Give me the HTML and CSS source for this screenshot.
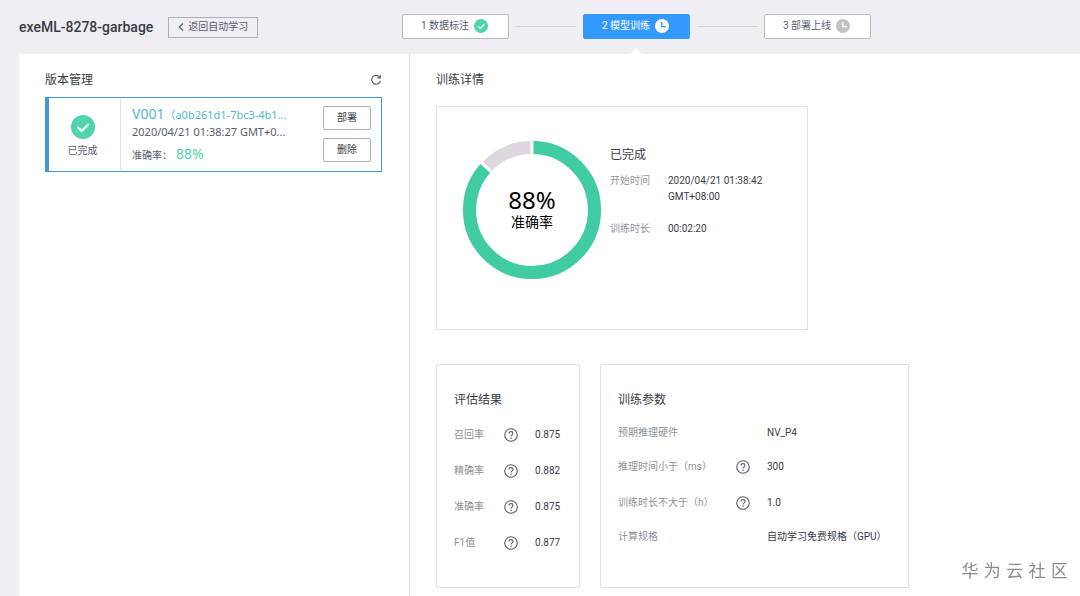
FILE: index.html
```html
<!DOCTYPE html>
<html lang="zh-CN">
<head>
  <meta charset="UTF-8">
  <meta name="viewport" content="width=device-width, initial-scale=1.0">
  <title>exeML-8278-garbage</title>
  <link rel="stylesheet" href="styles.css">
</head>
<body>
  <svg class="sprite" aria-hidden="true">
    <symbol id="icon-help" viewBox="0 0 14 14">
      <circle cx="7" cy="7" r="6.3" fill="none" stroke="currentColor" stroke-width="1.1"/>
      <path d="M5 5.6C5 4.3 5.9 3.6 7 3.6s2 .7 2 1.8c0 1.4-2 1.5-2 3" fill="none" stroke="currentColor" stroke-width="1.1"/>
      <circle cx="7" cy="10.2" r=".8" fill="currentColor"/>
    </symbol>
    <symbol id="icon-check" viewBox="0 0 24 24">
      <circle cx="12" cy="12" r="12" fill="#50d4ab"/>
      <path d="M6.5 12l4.2 4 7-7" fill="none" stroke="#fff" stroke-width="2"/>
    </symbol>
    <symbol id="icon-clock" viewBox="0 0 14 14">
      <circle cx="7" cy="7" r="7" fill="currentColor"/>
      <path class="clock-hand" d="M6.8 3v4.6h4" fill="none" stroke-width="1.4"/>
    </symbol>
  </svg>

  <header class="header">
    <div class="header-left">
      <h1>exeML-8278-garbage</h1>
      <button type="button" class="back-btn">
        <svg width="6" height="8" viewBox="0 0 6 8" aria-hidden="true"><path d="M5 .5L1.2 4 5 7.5" fill="none" stroke="currentColor" stroke-width="1.2"/></svg>
        返回自动学习
      </button>
    </div>
    <nav class="steps">
      <button type="button" class="step">1 数据标注 <svg class="step-icon"><use href="#icon-check"/></svg></button>
      <span class="step-line"></span>
      <button type="button" class="step active">2 模型训练 <svg class="step-icon"><use href="#icon-clock"/></svg></button>
      <span class="step-line"></span>
      <button type="button" class="step waiting">3 部署上线 <svg class="step-icon"><use href="#icon-clock"/></svg></button>
    </nav>
  </header>

  <main class="main">
    <aside class="versions">
      <div class="versions-head">
        <h2>版本管理</h2>
        <button type="button" class="refresh-btn" aria-label="刷新">
          <svg width="12" height="12" viewBox="0 0 12 12"><path d="M9.6 3A4.4 4.4 0 1 0 10.4 7M10.3 1v2.9H7.2" fill="none" stroke="currentColor" stroke-width="1.1"/></svg>
        </button>
      </div>

      <div class="version-card">
        <div class="version-status">
          <svg width="24" height="24"><use href="#icon-check"/></svg>
          <span>已完成</span>
        </div>
        <div class="version-info">
          <a href="#" class="version-name">V001<small>（a0b261d1-7bc3-4b1...</small></a>
          <p class="version-time">2020/04/21 01:38:27 GMT+0...</p>
          <p class="version-score">准确率：<b>88%</b></p>
        </div>
        <div class="version-actions">
          <button type="button">部署</button>
          <button type="button">删除</button>
        </div>
      </div>
    </aside>

    <section class="detail">
      <h2>训练详情</h2>

      <div class="panel summary">
        <div class="donut">
          <svg viewBox="0 0 138 138" aria-hidden="true">
            <circle cx="69" cy="69" r="62.5" fill="none" stroke="#dcd8de" stroke-width="13"/>
            <circle cx="69" cy="69" r="62.5" fill="none" stroke="#3fcca2" stroke-width="13" pathLength="100" stroke-dasharray="87 13" transform="rotate(-90 69 69)"/>
            <path d="M69 14V0" stroke="#fff" stroke-width="3"/>
            <path d="M69 14V0" stroke="#fff" stroke-width="3" transform="rotate(-47 69 69)"/>
          </svg>
          <div class="donut-text">
            <strong>88%</strong>
            <span>准确率</span>
          </div>
        </div>
        <div class="summary-info">
          <h3>已完成</h3>
          <dl>
            <dt>开始时间</dt>
            <dd>2020/04/21 01:38:42<br>GMT+08:00</dd>
            <dt>训练时长</dt>
            <dd>00:02:20</dd>
          </dl>
        </div>
      </div>

      <div class="panel-row">
        <div class="panel result">
          <h3>评估结果</h3>
          <table>
            <tr class="with-help"><th scope="row">召回率</th><td><svg class="help"><use href="#icon-help"/></svg></td><td>0.875</td></tr>
            <tr class="with-help"><th scope="row">精确率</th><td><svg class="help"><use href="#icon-help"/></svg></td><td>0.882</td></tr>
            <tr class="with-help"><th scope="row">准确率</th><td><svg class="help"><use href="#icon-help"/></svg></td><td>0.875</td></tr>
            <tr class="with-help"><th scope="row">F1值</th><td><svg class="help"><use href="#icon-help"/></svg></td><td>0.877</td></tr>
          </table>
        </div>

        <div class="panel params">
          <h3>训练参数</h3>
          <table>
            <tr><th scope="row">预期推理硬件</th><td></td><td>NV_P4</td></tr>
            <tr class="with-help"><th scope="row">推理时间小于（ms）</th><td><svg class="help"><use href="#icon-help"/></svg></td><td>300</td></tr>
            <tr class="with-help"><th scope="row">训练时长不大于（h）</th><td><svg class="help"><use href="#icon-help"/></svg></td><td>1.0</td></tr>
            <tr><th scope="row">计算规格</th><td></td><td>自动学习免费规格（GPU）</td></tr>
          </table>
        </div>
      </div>
    </section>
  </main>

  <div class="watermark">华 为 云 社 区</div>
</body>
</html>
```

FILE: styles.css
```css
:root {
  --bg: #eeeef3;
  --blue: #3399ff;
  --green: #50d4ab;
  --text: #383b45;
  --text-muted: #8f929b;
  --border: #dfe1e6;
}

* {
  box-sizing: border-box;
}

body {
  margin: 0;
  font-family: Roboto, "Noto Sans CJK SC", sans-serif;
  font-size: 10px;
  line-height: 16px;
  background: var(--bg);
  color: var(--text);
}

h1, h2, h3, p, dl, dd {
  margin: 0;
}

h2, h3 {
  font-size: 12px;
  font-weight: 400;
}

button {
  font: inherit;
  color: inherit;
  padding: 0;
  cursor: pointer;
}

.sprite {
  display: none;
}

/* header */
.header {
  display: flex;
  height: 54px;
  padding-left: 19px;
}

.header-left {
  display: flex;
  align-items: center;
  gap: 15px;
  width: 383px;
}

h1 {
  font-size: 14px;
  font-weight: 500;
}

.back-btn {
  display: flex;
  align-items: center;
  gap: 4px;
  height: 21px;
  padding: 0 9px;
  border: 1px solid #adb0b8;
  background: transparent;
  color: #575d6c;
}

.steps {
  display: flex;
  align-items: center;
  gap: 7px;
  height: 52px;
}

.step {
  display: flex;
  align-items: center;
  justify-content: center;
  gap: 5px;
  width: 107px;
  height: 25px;
  padding-right: 2px;
  border: 1px solid #b8bac2;
  border-radius: 2px;
  background: #fff;
  color: #575d6c;
}

.step-icon {
  width: 14px;
  height: 14px;
}

.step-line {
  width: 60px;
  height: 1px;
  background: #cfd1d8;
}

.step.active {
  position: relative;
  border-color: var(--blue);
  background: var(--blue);
  color: #fff;
}

/* arrow that joins the current step to the content */
.step.active::after {
  content: "";
  position: absolute;
  top: 33px;
  left: 44px;
  border: 8px solid transparent;
  border-top: 0;
  border-bottom-color: #fff;
}

.clock-hand {
  stroke: var(--blue);
}

.waiting .step-icon {
  color: #c3c3c5;
}

.waiting {
  --blue: #fff;
}

/* content */
.main {
  display: flex;
  min-height: calc(100vh - 54px);
  margin-left: 19px;
  background: #fff;
}

.versions {
  width: 391px;
  padding: 18px 27px 0 26px;
  border-right: 1px solid var(--border);
}

.versions-head {
  display: flex;
  justify-content: space-between;
  align-items: center;
  margin-bottom: 9px;
}

.refresh-btn {
  display: flex;
  border: 0;
  background: none;
  color: #575d6c;
}

.version-card {
  display: flex;
  height: 75px;
  border: 1px solid #3f97dc;
  border-left-width: 4px;
}

.version-status {
  display: flex;
  flex-direction: column;
  align-items: center;
  justify-content: center;
  gap: 4px;
  width: 72px;
  padding-top: 4px;
  padding-right: 4px;
  border-right: 1px solid var(--border);
  color: #575d6c;
}

.version-info {
  flex: 1;
  padding: 6px 0 0 11px;
  font-family: "Noto Sans", "Noto Sans CJK SC", sans-serif;
  color: #575d6c;
  white-space: nowrap;
}

.version-name {
  display: block;
  height: 20px;
  line-height: 19px;
  font-size: 14px;
  color: #4fb8ce;
  text-decoration: none;
}

.version-name small,
.version-time {
  font-size: 11px;
}

.version-score {
  margin-top: 4px;
  line-height: 20px;
}

.version-score b {
  margin-left: 4px;
  font-size: 14px;
  font-weight: 400;
  color: var(--green);
}

.version-actions {
  display: flex;
  flex-direction: column;
  gap: 8px;
  padding: 8px 10px;
}

.version-actions button {
  width: 48px;
  height: 24px;
  border: 1px solid #adb0b8;
  border-radius: 2px;
  background: #fff;
}

.detail {
  flex: 1;
  padding: 18px 26px 8px;
}

.panel {
  border: 1px solid var(--border);
}

.summary {
  display: flex;
  gap: 9px;
  width: 372px;
  max-width: 100%;
  height: 224px;
  margin: 18px 0 34px;
  padding: 34px 26px;
}

.donut {
  display: grid;
  place-items: center;
  width: 138px;
  height: 138px;
}

.donut svg,
.donut-text {
  grid-area: 1 / 1;
}

.donut-text {
  display: flex;
  flex-direction: column;
  align-items: center;
  font-size: 14px;
  line-height: 20px;
  color: #000;
}

.donut-text strong {
  font-family: "Noto Sans", sans-serif;
  font-size: 24px;
  line-height: 24px;
  font-weight: 400;
}

.summary-info {
  padding-top: 6px;
}

.summary-info dl {
  display: grid;
  grid-template-columns: 58px auto;
  row-gap: 16px;
  margin-top: 10px;
}

dt, th {
  color: var(--text-muted);
}

.panel-row {
  display: flex;
  gap: 20px;
}

.result {
  width: 144px;
}

.params {
  width: 309px;
}

.result,
.params {
  padding: 23px 17px 26px;
}

.panel-row h3 {
  margin-bottom: 5px;
  line-height: 24px;
}

table {
  width: 100%;
  border-collapse: collapse;
}

th, td {
  height: 32px;
  padding: 0;
  font-weight: 400;
  text-align: left;
  white-space: nowrap;
}

.with-help th,
.with-help td {
  height: 36px;
}

th {
  width: 50px;
}

.params th {
  width: 118px;
}

td:nth-child(2) {
  width: 31px;
}

.help {
  display: block;
  width: 14px;
  height: 14px;
  color: #575d6c;
}

.watermark {
  position: fixed;
  right: 12px;
  bottom: 13px;
  font-family: "DejaVu Sans", "Noto Sans CJK SC", sans-serif;
  font-size: 17px;
  line-height: 24px;
  color: #8c8c8c;
}
```
